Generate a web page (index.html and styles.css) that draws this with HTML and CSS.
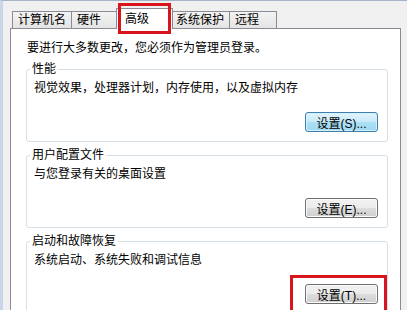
FILE: index.html
```html
<!DOCTYPE html>
<html lang="zh-CN">
<head>
    <meta charset="UTF-8">
    <meta name="viewport" content="width=device-width, initial-scale=1.0">
    <title>系统属性</title>
    <link rel="stylesheet" href="styles.css">
</head>
<body>
    <div class="window">
        <ul class="tabs">
            <li class="tab">计算机名</li>
            <li class="tab">硬件</li>
            <li class="tab tab-active">高级<span class="mark mark-tab"></span></li>
            <li class="tab">系统保护</li>
            <li class="tab">远程</li>
        </ul>
        <div class="panel">
            <p class="note">要进行大多数更改，您必须作为管理员登录。</p>

            <fieldset class="group">
                <legend>性能</legend>
                <p>视觉效果，处理器计划，内存使用，以及虚拟内存</p>
                <div class="actions">
                    <button class="button button-default">设置(S)...</button>
                </div>
            </fieldset>

            <fieldset class="group">
                <legend>用户配置文件</legend>
                <p>与您登录有关的桌面设置</p>
                <div class="actions">
                    <button class="button">设置(E)...</button>
                </div>
            </fieldset>

            <fieldset class="group">
                <legend>启动和故障恢复</legend>
                <p>系统启动、系统失败和调试信息</p>
                <div class="actions">
                    <button class="button">设置(T)...</button>
                    <span class="mark mark-button"></span>
                </div>
            </fieldset>
        </div>
    </div>
</body>
</html>
```

FILE: styles.css
```css
html, body {
    margin: 0;
    height: 100%;
}
body {
    background-color: #f0f0f0;
    font-family: "Liberation Sans", "Noto Sans CJK SC", sans-serif;
    font-size: 12px;
    line-height: 14px;
    color: #000;
    overflow: hidden;
}
.window {
    display: flex;
    flex-direction: column;
    height: 310px;
    box-sizing: border-box;
    overflow: hidden;
    border-top: 1px solid #a3b3c8;
    border-left: 3px solid #c7d6e8;
    padding: 7px 6px 0 7px;
}

/* tab strip */
.tabs {
    display: flex;
    align-items: flex-end;
    flex: none;
    list-style: none;
    margin: 0 0 0 2px;
    padding: 0;
    position: relative;
    z-index: 1;
}
.tab {
    box-sizing: border-box;
    min-width: 48px;
    height: 17px;
    padding: 0 5px;
    margin-left: -1px;
    line-height: 16px;
    border: 1px solid #898c95;
    border-bottom: none;
    background: linear-gradient(#f3f3f3, #e4e4e4);
    white-space: nowrap;
}
.tab:first-child {
    margin-left: 0;
}
.tab-active {
    position: relative;
    width: 57px;
    height: 21px;
    margin: 0 -2px -1px -3px;
    padding: 2px 0 2px 8px;
    background: #fff;
    z-index: 2;
}
.tab-active + .tab {
    margin-left: -1px;
}

/* red highlight boxes */
.mark {
    position: absolute;
    box-sizing: border-box;
    border: 3px solid #d8141c;
    pointer-events: none;
}
.mark-tab {
    left: 1px;
    top: -6px;
    width: 53px;
    height: 31px;
}
.mark-button {
    right: -9px;
    top: -9px;
    width: 97px;
    height: 40px;
}

/* page body */
.panel {
    flex: 1;
    min-height: 0;
    overflow: hidden;
    background-color: #fff;
    border: 1px solid #898c95;
    border-bottom: none;
    padding: 12px 12px 0 15px;
}
.note {
    margin: 0 0 7px 1px;
}
.group {
    margin: 0 0 6px;
    min-width: 0;
    padding: 5px 9px 9px 7px;
    border: 1px solid #d5dfe5;
    border-radius: 3px;
}
.group legend {
    margin-left: -4px;
    padding: 0 2px;
    line-height: 14px;
}
.group p {
    margin: 0;
}
.actions {
    position: relative;
    display: flex;
    justify-content: flex-end;
    margin-top: 17px;
}

/* buttons */
.button {
    width: 73px;
    height: 20px;
    padding: 0;
    font-family: inherit;
    font-size: 12px;
    color: #000;
    border: 1px solid #707070;
    border-radius: 3px;
    background: linear-gradient(#f2f2f2 0%, #ebebeb 50%, #dddddd 50%, #cfcfcf 100%);
    box-shadow: inset 0 0 0 1px #fbfbfb;
}
.button-default {
    border-color: #3c7fb1;
    background: linear-gradient(#e2f4fc 0%, #c6e9f8 50%, #ace0f5 50%, #a0d9f2 100%);
    box-shadow: inset 0 0 0 1px #d6f0fb;
}
```
